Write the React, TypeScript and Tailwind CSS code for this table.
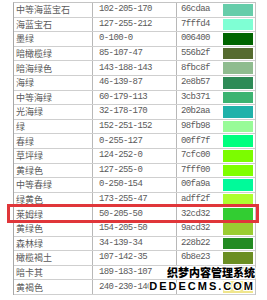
const rows: [string, string, string][] = [
  ["中等海蓝宝石", "102-205-170", "66cdaa"],
  ["海蓝宝石", "127-255-212", "7fffd4"],
  ["墨绿", "0-100-0", "006400"],
  ["暗橄榄绿", "85-107-47", "556b2f"],
  ["暗海绿色", "143-188-143", "8fbc8f"],
  ["海绿", "46-139-87", "2e8b57"],
  ["中等海绿", "60-179-113", "3cb371"],
  ["光海绿", "32-178-170", "20b2aa"],
  ["绿", "152-251-152", "98fb98"],
  ["春绿", "0-255-127", "00ff7f"],
  ["草坪绿", "124-252-0", "7cfc00"],
  ["黄绿色", "127-255-0", "7fff00"],
  ["中等春绿", "0-250-154", "00fa9a"],
  ["绿黄色", "173-255-47", "adff2f"],
  ["莱姆绿", "50-205-50", "32cd32"],
  ["黄绿色", "154-205-50", "9acd32"],
  ["森林绿", "34-139-34", "228b22"],
  ["橄榄褐土", "107-142-35", "6b8e23"],
  ["暗卡其", "189-183-107", "bdb76b"],
  ["黄褐色", "240-230-140", "f0e68c"],
];

const cjk = { fontFamily: '"Noto Sans CJK SC", sans-serif' };
const mono = { fontFamily: '"Liberation Mono", monospace' };

// the last two hex codes sit under the watermark in the screenshot
const hidden = 18;

export default function App() {
  return (
    <div className="relative w-[267px] h-[300px] bg-white overflow-hidden">
      <div className="ml-[13px] mt-[2px] w-[243px] border-t border-l border-r border-[#c4c4c4] border-l-[#a8a8a8]">
        {rows.map(([name, rgb, hex], i) => (
          <div key={i} className="flex h-[14.6px] border-b border-[#cfcfcf] text-[#5a5a5a]">
            <div className="w-[78px] flex items-center pl-[2px] text-[9px] leading-none" style={cjk}>
              {name}
            </div>
            <div
              className="w-[84px] flex items-center pl-[6px] border-l border-[#b8b8b8] text-[9px] tracking-[-0.6px] leading-none"
              style={mono}
            >
              {rgb}
            </div>
            <div
              className="w-[46px] flex items-center pl-[4px] border-l border-[#b8b8b8] text-[9px] tracking-[-0.6px] leading-none"
              style={mono}
            >
              {i < hidden ? hex : ""}
            </div>
            <div className="flex-1 py-[1px] pl-[1px] pr-[2px]">
              <div className="h-full" style={{ backgroundColor: `#${hex}` }} />
            </div>
          </div>
        ))}
      </div>

      {/* highlight box */}
      <div className="absolute left-[7px] top-[204px] w-[252px] h-[19px] border-[3px] border-[#e0363a]" />

      {/* watermark */}
      <div className="absolute left-[158px] top-[265px] w-[97px] flex flex-col items-end">
        <div
          className="text-[11px] font-black leading-[14px] text-black [text-shadow:1px_0_0_#fff,-1px_0_0_#fff,0_1px_0_#fff,0_-1px_0_#fff,1px_1px_0_#fff,-1px_-1px_0_#fff,1px_-1px_0_#fff,-1px_1px_0_#fff]"
          style={cjk}
        >
          织梦内容管理系统
        </div>
        <div
          className="mt-[2px] text-[11px] font-bold leading-[10px] tracking-[2px] whitespace-nowrap text-black [text-shadow:1px_0_0_#fff,-1px_0_0_#fff,0_1px_0_#fff,0_-1px_0_#fff,1px_1px_0_#fff,-1px_-1px_0_#fff,1px_-1px_0_#fff,-1px_1px_0_#fff]"
          style={{ fontFamily: '"Liberation Sans", Arial, sans-serif' }}
        >
          DEDECMS.COM
        </div>
      </div>
    </div>
  );
}
